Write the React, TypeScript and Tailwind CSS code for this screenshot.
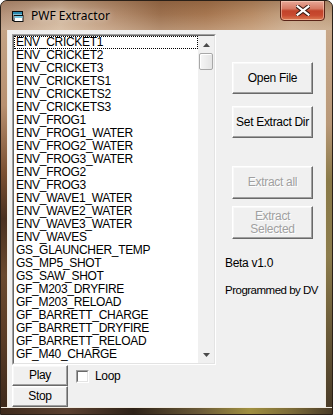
import React from 'react';

const items = [
  'ENV_CRICKET1',
  'ENV_CRICKET2',
  'ENV_CRICKET3',
  'ENV_CRICKETS1',
  'ENV_CRICKETS2',
  'ENV_CRICKETS3',
  'ENV_FROG1',
  'ENV_FROG1_WATER',
  'ENV_FROG2_WATER',
  'ENV_FROG3_WATER',
  'ENV_FROG2',
  'ENV_FROG3',
  'ENV_WAVE1_WATER',
  'ENV_WAVE2_WATER',
  'ENV_WAVE3_WATER',
  'ENV_WAVES',
  'GS_GLAUNCHER_TEMP',
  'GS_MP5_SHOT',
  'GS_SAW_SHOT',
  'GF_M203_DRYFIRE',
  'GF_M203_RELOAD',
  'GF_BARRETT_CHARGE',
  'GF_BARRETT_DRYFIRE',
  'GF_BARRETT_RELOAD',
  'GF_M40_CHARGE',
];

const font = "font-['Liberation_Sans',Arial,sans-serif]";

type BtnProps = {
  children: React.ReactNode;
  disabled?: boolean;
  className?: string;
};

// classic raised win32 button
const Btn: React.FC<BtnProps> = ({ children, disabled, className }) => (
  <div
    className={`flex items-center justify-center border border-t-white border-l-white border-b-[#696969] border-r-[#696969] bg-[#f0f0f0] text-center text-[12px] leading-[13px] tracking-[-0.3px] shadow-[inset_-1px_-1px_0_#a0a0a0,inset_1px_1px_0_#f8f8f8] ${
      disabled ? 'text-[#a0a0a0] [text-shadow:1px_1px_0_#ffffff]' : 'text-black'
    } ${className ?? ''}`}
  >
    {children}
  </div>
);

const WindowIcon = () => (
  <svg width="12" height="11" viewBox="0 0 12 11">
    <rect x="0.5" y="0.5" width="10" height="9" fill="#e8f4f8" stroke="#101010" />
    <rect x="1" y="1" width="9" height="2.5" fill="#2a8ab0" />
    <rect x="2" y="4.5" width="9" height="6" fill="#ffffff" stroke="#101010" />
    <rect x="2.5" y="5" width="8" height="2" fill="#7cc8e0" />
  </svg>
);

const Arrow: React.FC<{ up?: boolean }> = ({ up }) => (
  <svg width="7" height="4" viewBox="0 0 7 4">
    {up ? (
      <path d="M3.5 0 L7 4 L0 4 Z" fill="#4a4a4a" />
    ) : (
      <path d="M0 0 L7 0 L3.5 4 Z" fill="#4a4a4a" />
    )}
  </svg>
);

export default function App() {
  return (
    <div className="w-[333px] h-[415px] overflow-hidden">
      <div className="flex h-[415px] w-[333px] flex-col overflow-hidden rounded-t-[7px] border border-[#2a2018] bg-[#6e5038]">
        {/* Title bar */}
        <div className="relative flex h-[29px] items-center bg-[linear-gradient(90deg,#b4927a_0%,#cdb298_18%,#b89274_32%,#9c704e_48%,#a67650_62%,#b88c66_76%,#c4a486_88%,#bc9c7c_100%)]">
          <div className="absolute inset-0 bg-[linear-gradient(180deg,rgba(90,50,20,0.25)_0%,rgba(255,255,255,0)_45%,rgba(255,240,220,0.25)_100%)]" />
          <div className="relative ml-[11px] mt-[1px] flex items-center">
            <WindowIcon />
          </div>
          <span className="relative ml-[7px] text-[12px] text-black font-['Noto_Sans','Open_Sans',sans-serif] [text-shadow:0_0_6px_rgba(255,255,255,0.7)]">
            PWF Extractor
          </span>
          {/* close button */}
          <div className="absolute right-[7px] top-[-1px] flex h-[21px] w-[45px] items-center justify-center rounded-b-[4px] border border-[#5a2418] bg-[linear-gradient(180deg,#e8a898_0%,#d67a64_40%,#c2432a_52%,#c84a30_75%,#dc7a52_100%)] shadow-[inset_0_0_0_1px_rgba(255,220,200,0.5)]">
            <svg width="14" height="11" viewBox="0 0 14 11">
              <path
                d="M1 1 L13 10 M13 1 L1 10"
                stroke="#3a1a12"
                strokeWidth="4.2"
                strokeLinecap="square"
              />
              <path
                d="M1.5 1.3 L12.5 9.7 M12.5 1.3 L1.5 9.7"
                stroke="#ffffff"
                strokeWidth="2.2"
                strokeLinecap="square"
              />
            </svg>
          </div>
        </div>

        <div className="flex flex-1">
          {/* left frame */}
          <div className="w-[7px] border-r border-r-[#f2ece2] bg-[linear-gradient(180deg,#c4a486_0%,#b89070_20%,#7a5032_38%,#4a3020_50%,#6a4a30_65%,#5a3c26_82%,#3e2a1c_100%)]" />

          {/* client area */}
          <div className={`flex h-[377px] w-[317px] flex-col bg-[#f0f0f0] ${font}`}>
            <div className="flex">
              {/* listbox */}
              <div className="ml-[4px] mt-[4px] flex h-[331px] w-[204px] border border-t-[#a0a0a0] border-l-[#a0a0a0] border-b-white border-r-white">
                <div className="flex flex-1 border border-t-[#696969] border-l-[#696969] border-b-[#e3e3e3] border-r-[#e3e3e3] bg-white">
                  <div className="w-[184px] overflow-hidden">
                    {items.map((item, i) => (
                      <div
                        key={item}
                        className={`h-[13px] whitespace-nowrap pl-[2px] text-[12px] leading-[13px] tracking-[-0.3px] text-black ${
                          i === 0 ? 'outline-1 outline-dotted outline-offset-[-1px] outline-black' : ''
                        }`}
                      >
                        {item}
                      </div>
                    ))}
                  </div>
                  {/* scrollbar */}
                  <div className="flex w-[16px] flex-col bg-[#f0f0f0]">
                    <div className="flex h-[17px] items-center justify-center">
                      <Arrow up />
                    </div>
                    <div className="mx-[1px] h-[17px] rounded-[2px] border border-[#a8a8a8] bg-[linear-gradient(90deg,#f6f6f6,#e4e4e4)] shadow-[inset_1px_1px_0_#ffffff]" />
                    <div className="flex-1" />
                    <div className="flex h-[17px] items-center justify-center">
                      <Arrow />
                    </div>
                  </div>
                </div>
              </div>

              {/* right column */}
              <div className="ml-[16px] flex w-[81px] flex-col">
                <Btn className="mt-[32px] h-[32px]">Open File</Btn>
                <Btn className="mt-[12px] h-[32px]">Set Extract Dir</Btn>
                <Btn disabled className="mt-[28px] h-[33px]">
                  Extract all
                </Btn>
                <Btn disabled className="mt-[7px] h-[33px]">
                  Extract
                  <br />
                  Selected
                </Btn>
                <div className="-ml-[7px] mt-[17px] text-[12px] leading-[14px] tracking-[-0.3px] text-black">
                  Beta v1.0
                </div>
                <div className="-ml-[7px] mt-[13px] whitespace-nowrap text-[11.5px] leading-[14px] tracking-[-0.5px] text-black">
                  Programmed by DV
                </div>
              </div>
            </div>

            {/* bottom controls */}
            <div className="flex">
              <div className="ml-[4px] flex w-[56px] flex-col">
                <Btn className="h-[21px]">Play</Btn>
                <Btn className="h-[21px]">Stop</Btn>
              </div>
              <div className="ml-[8px] mt-[5px] flex h-[13px] items-center">
                <div className="h-[13px] w-[13px] border border-t-[#a0a0a0] border-l-[#a0a0a0] border-b-white border-r-white">
                  <div className="h-full w-full border border-t-[#696969] border-l-[#696969] border-b-[#e3e3e3] border-r-[#e3e3e3] bg-white" />
                </div>
                <span className="ml-[6px] text-[12px] leading-[13px] tracking-[-0.3px] text-black">Loop</span>
              </div>
            </div>
          </div>

          {/* right frame */}
          <div className="w-[7px] border-l border-l-[#f2ece2] bg-[linear-gradient(180deg,#c8a88a_0%,#b89878_25%,#8a7a48_40%,#8c7c4c_60%,#6a5a38_80%,#4a3c28_100%)]" />
        </div>

        {/* bottom frame */}
        <div className="h-[7px] border-t border-t-[#f2ece2] bg-[linear-gradient(90deg,#3e2a1c_0%,#5a4030_20%,#2e2218_40%,#6a5a38_60%,#a09040_75%,#7a6a38_88%,#4a3c28_100%)]" />
      </div>
    </div>
  );
}
